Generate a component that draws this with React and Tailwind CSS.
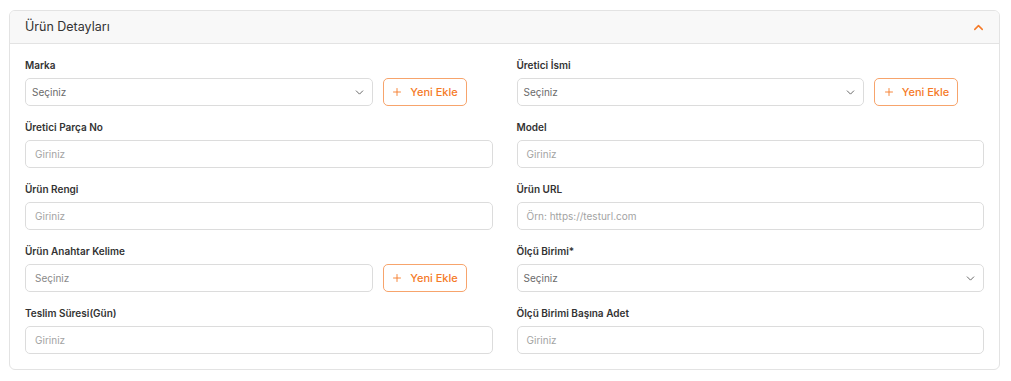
import { ChevronDown, ChevronUp, Plus } from "lucide-react";

function Label({ children }) {
  return (
    <div className="text-[10px] leading-4 font-semibold text-[#333] mb-[5px]">{children}</div>
  );
}

function Select({ className = "" }) {
  return (
    <div className={"h-[28px] flex items-center justify-between border border-[#dcdcdc] rounded-[5px] bg-white pl-[6px] pr-[6px] " + className}>
      <span className="text-[10px] text-[#6b6b6b]">Seçiniz</span>
      <ChevronDown className="w-[13px] h-[13px] text-[#666]" strokeWidth={1.8} />
    </div>
  );
}

function Input({ placeholder = "Giriniz", className = "" }) {
  return (
    <div className={"h-[28px] flex items-center border border-[#dcdcdc] rounded-[5px] bg-white px-[9px] " + className}>
      <span className="text-[10px] text-[#a3a3a3]">{placeholder}</span>
    </div>
  );
}

function AddButton() {
  return (
    <button className="w-[84px] h-[28px] shrink-0 flex items-center justify-center gap-[7px] border border-[#f7a46c] rounded-[5px] bg-white text-[#f57a28] text-[11px] font-medium">
      <Plus className="w-[12px] h-[12px]" strokeWidth={1.8} />
      Yeni Ekle
    </button>
  );
}

function WithButton({ children }) {
  return (
    <div className="flex gap-[10px] pr-[26px]">
      <div className="flex-1">{children}</div>
      <AddButton />
    </div>
  );
}

export default function App() {
  return (
    <div className="min-h-screen bg-white pl-[9px] pr-[11px] pt-[10px] pb-[10px]" style={{ fontFamily: "Inter, 'Noto Sans', sans-serif" }}>
      <div className="border border-[#e3e3e3] rounded-[6px] overflow-hidden">
        <div className="h-[33px] bg-[#f8f8f8] border-b border-[#e3e3e3] flex items-center justify-between pl-[15px] pr-[13px]">
          <span className="text-[12.5px] text-[#333]">Ürün Detayları</span>
          <ChevronUp className="w-[15px] h-[15px] text-[#f57a28]" strokeWidth={2.4} />
        </div>
        <div className="px-[15px] pt-[13px] pb-[15px] grid grid-cols-2 gap-x-6 gap-y-[13px]">
          <div>
            <Label>Marka</Label>
            <WithButton><Select /></WithButton>
          </div>
          <div>
            <Label>Üretici İsmi</Label>
            <WithButton><Select /></WithButton>
          </div>
          <div>
            <Label>Üretici Parça No</Label>
            <Input />
          </div>
          <div>
            <Label>Model</Label>
            <Input />
          </div>
          <div>
            <Label>Ürün Rengi</Label>
            <Input />
          </div>
          <div>
            <Label>Ürün URL</Label>
            <Input placeholder="Örn: https://testurl.com" />
          </div>
          <div>
            <Label>Ürün Anahtar Kelime</Label>
            <WithButton>
              <div className="h-[28px] flex items-center border border-[#dcdcdc] rounded-[5px] bg-white px-[9px]">
                <span className="text-[10px] text-[#8a8a8a]">Seçiniz</span>
              </div>
            </WithButton>
          </div>
          <div>
            <Label>Ölçü Birimi*</Label>
            <Select />
          </div>
          <div>
            <Label>Teslim Süresi(Gün)</Label>
            <Input />
          </div>
          <div>
            <Label>Ölçü Birimi Başına Adet</Label>
            <Input />
          </div>
        </div>
      </div>
    </div>
  );
}
